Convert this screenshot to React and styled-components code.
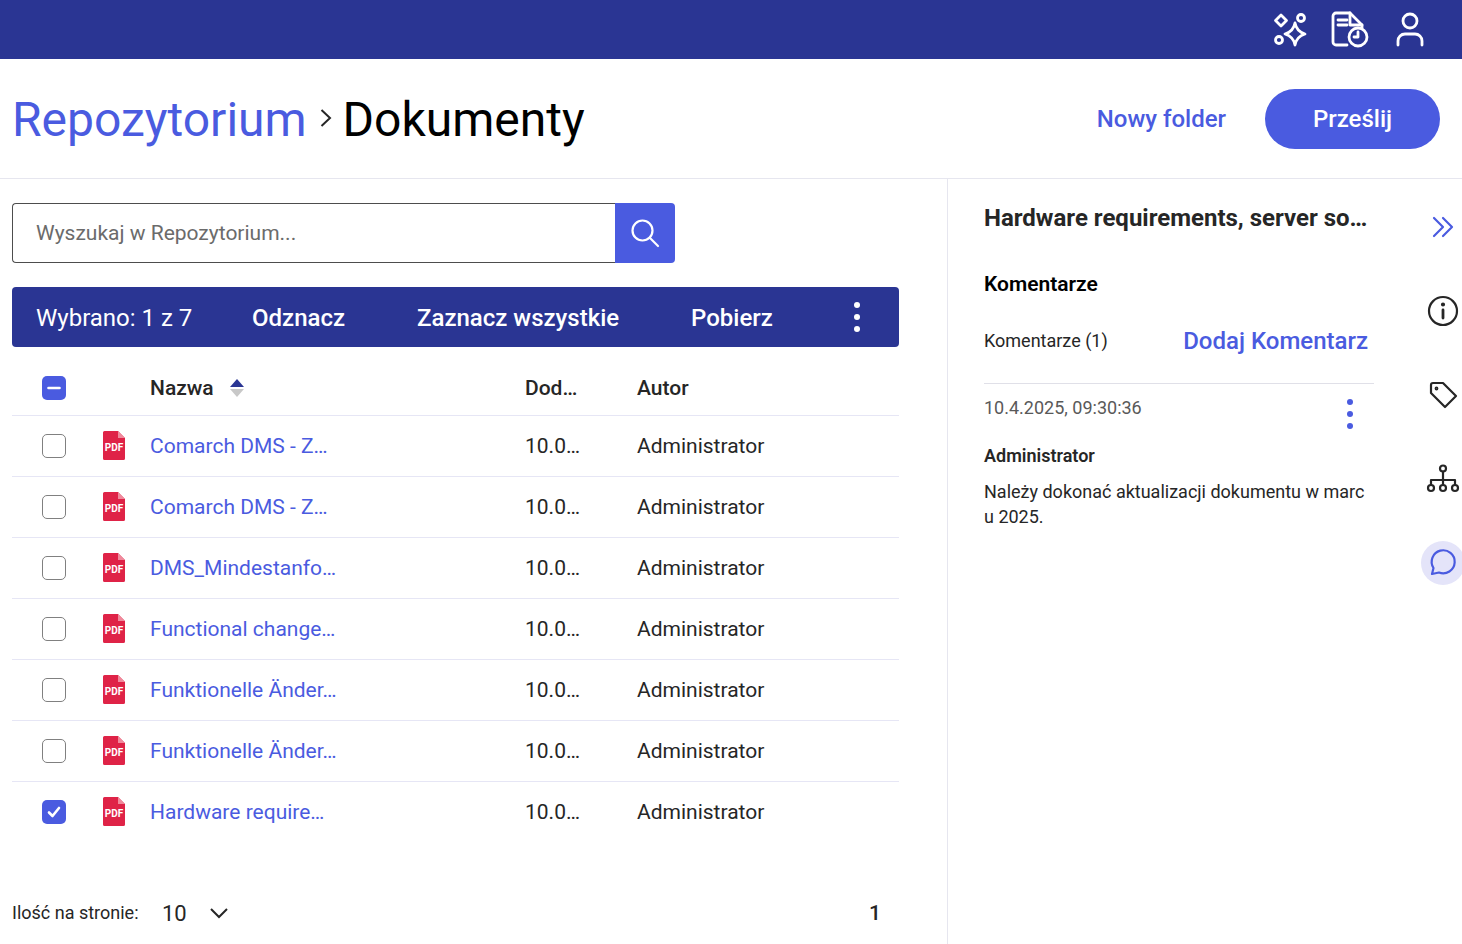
import React from 'react';
import styled, { createGlobalStyle } from 'styled-components';

const Global = createGlobalStyle`
  html, body { margin: 0; padding: 0; background: #fff; }
  body { font-family: Roboto, "Liberation Sans", sans-serif; color: #262626; }
  * { box-sizing: border-box; }
`;
const Page = styled.div`
  width: 1462px; height: 944px; overflow: hidden; display: flex; flex-direction: column;
`;
const TopBar = styled.header`
  height: 59px; background: #2a3593; display: flex; align-items: center; justify-content: flex-end;
  padding: 0 32px 0 0; gap: 20px; flex: none;
`;
const TopIcon = styled.svg`
  width: 40px; height: 40px; fill: none; stroke: #fff; stroke-width: 2.8; stroke-linecap: round; stroke-linejoin: round;
`;
const TitleRow = styled.div`
  height: 120px; flex: none; display: flex; align-items: center; justify-content: space-between;
  padding: 0 22px 0 12px; border-bottom: 1px solid #e6e6ef;
`;
const Crumbs = styled.div`
  display: flex; align-items: center; font-size: 48px; line-height: 60px; padding-top: 2px;
`;
const CrumbLink = styled.span`color: #4a5be0;`;
const CrumbNow = styled.span`color: #000;`;
const CrumbSep = styled.svg`
  width: 14px; height: 24px; margin: 0 11px 3px 11px; fill: none; stroke: #262626; stroke-width: 2;
`;
const Actions = styled.div`display: flex; align-items: center; gap: 39px;`;
const LinkButton = styled.span`font-size: 24px; font-weight: 500; color: #4a5be0;`;
const Primary = styled.button`
  width: 175px; height: 60px; border: 0; border-radius: 30px; background: #4a5be0; color: #fff;
  font: 500 24px Roboto, sans-serif;
`;
const Body = styled.div`flex: 1; display: flex; min-height: 0;`;
const Left = styled.main`
  width: 948px; flex: none; border-right: 1px solid #e6e6ef; padding: 24px 48px 0 12px; display: flex; flex-direction: column;
`;
const Search = styled.div`display: flex; width: 663px; height: 60px;`;
const SearchBox = styled.div`
  flex: 1; border: 1px solid #4d4d4d; border-right: 0; border-radius: 4px 0 0 4px; display: flex; align-items: center;
  padding-left: 23px; font-size: 21px; color: #6b6b6b;
`;
const SearchBtn = styled.div`
  width: 60px; background: #4a5be0; border-radius: 0 4px 4px 0; display: flex; align-items: center; justify-content: center;
`;
const SelBar = styled.div`
  margin-top: 24px; height: 60px; background: #2a3593; border-radius: 4px; color: #fff; display: flex; align-items: center;
  padding-left: 24px; font-size: 24px; position: relative;
`;
const SelCount = styled.span`width: 216px; flex: none; margin-top: 1px;`;
const SelAction = styled.span`font-weight: 500; width: ${p => p.$w}px; flex: none; margin-top: 1px;`;
const Dots = styled.svg`width: 8px; height: 32px; fill: ${p => p.$c}; margin-top: ${p => p.$mt || 0}px;`;
const Row = styled.div`
  display: grid; grid-template-columns: 84px 54px 375px 112px 1fr; align-items: center; height: ${p => p.$h || 61}px;
  padding-top: ${p => p.$pt || 0}px;
  border-bottom: 1px solid ${p => p.$last ? 'transparent' : '#e6e6f5'}; font-size: 21px;
`;
const HeadCell = styled.div`font-weight: 500; display: flex; align-items: center; gap: 16px;`;
const CheckCell = styled.div`padding-left: 30px; display: flex;`;
const Box = styled.div`
  width: 24px; height: 24px; border-radius: 5px; display: flex; align-items: center; justify-content: center;
  background: ${p => p.$on ? '#4a5be0' : '#fff'}; border: ${p => p.$on ? 0 : '1px solid #808080'};
`;
const BoxMark = styled.svg`width: 18px; height: 18px; fill: none; stroke: #fff; stroke-width: 2.6; stroke-linecap: round; stroke-linejoin: round;`;
const PdfWrap = styled.div`padding-left: 7px; display: flex; margin-bottom: 2px;`;
const NameLink = styled.span`color: #4a5be0;`;
const Footer = styled.div`
  margin-top: 49px; display: flex; align-items: center; height: 42px; position: relative;
`;
const PerPage = styled.span`font-size: 18px; width: 150px; margin-bottom: 2px;`;
const PerValue = styled.span`font-size: 22px; width: 47px;`;
const PageNum = styled.span`font-size: 21px; font-weight: 500; margin-left: auto; margin-right: 18px;`;
const Chevron = styled.svg`width: 20px; height: 12px; fill: none; stroke: #262626; stroke-width: 2;`;
const Right = styled.aside`
  flex: 1; display: flex; min-width: 0; padding: 24px 0 0 36px; position: relative;
`;
const Detail = styled.div`width: 390px; flex: none; display: flex; flex-direction: column;`;
const DetailTitle = styled.div`font-size: 24px; font-weight: 700; line-height: 30px; height: 30px; white-space: nowrap;`;
const SectionTitle = styled.div`font-size: 21px; font-weight: 600; color: #000; margin-top: 37px; line-height: 28px;`;
const CommentHead = styled.div`
  display: flex; justify-content: space-between; align-items: center; margin-top: 26px; height: 32px; padding-right: 6px;
  font-size: 18px;
`;
const AddLink = styled.span`font-size: 24px; font-weight: 500; color: #4a5be0; margin-top: 2px;`;
const Comment = styled.div`margin-top: 27px; border-top: 1px solid #e0e0e8; padding-top: 12px;`;
const CommentMeta = styled.div`display: flex; justify-content: space-between; font-size: 18px; color: #595959; line-height: 24px; padding-right: 20px;`;
const Author = styled.div`font-size: 18px; font-weight: 600; margin-top: 13px; line-height: 26px;`;
const CommentText = styled.div`font-size: 18px; line-height: 25px; margin-top: 10px; word-break: break-all; width: 385px;`;
const Rail = styled.div`
  flex: none; width: 88px; display: flex; flex-direction: column; align-items: center; margin-left: 25px; padding-top: 2px;
  margin-right: -44px;
`;
const RailBtn = styled.div`
  width: 44px; height: 44px; margin-bottom: 40px; border-radius: 50%; display: flex; align-items: center; justify-content: center;
  background: ${p => p.$active ? '#e4e4f9' : 'transparent'};
`;
const RailIcon = styled.svg`
  width: 36px; height: 36px; fill: none; stroke: ${p => p.$c || '#262626'}; stroke-width: 2.2; stroke-linecap: round; stroke-linejoin: round;
`;

const Pdf = () => (
  <svg width="22" height="29" viewBox="0 0 22 29">
    <path d="M1.5 0H15l7 7v20.5a1.5 1.5 0 0 1-1.5 1.5h-19A1.5 1.5 0 0 1 0 27.500V1.500A1.500 1.500 0 0 1 1.500 0z" fill="#df2347" />
    <path d="M15 0l7 7h-7z" fill="#f08a9c" />
    <text x="11" y="20" textAnchor="middle" fill="#fff" fontSize="10" fontWeight="700" fontFamily="Roboto, sans-serif">PDF</text>
  </svg>
);
const Check = ({ state }) => (
  <Box $on={!!state}>
    {state === 'all' && <BoxMark viewBox="0 0 18 18"><path d="M4 9.500l3.500 3.500L14 5" /></BoxMark>}
    {state === 'some' && <BoxMark viewBox="0 0 18 18"><path d="M3.500 9h11" /></BoxMark>}
  </Box>
);
const rows = [
  'Comarch DMS - Z…', 'Comarch DMS - Z…', 'DMS_Mindestanfo…', 'Functional change…',
  'Funktionelle Änder…', 'Funktionelle Änder…', 'Hardware require…',
];

export default function App() {
  return (
    <Page>
      <Global />
      <TopBar>
        <TopIcon viewBox="0 0 40 40">
          <path d="M11 5l5.500 5.500L11 16l-5.500-5.500z" />
          <circle cx="31" cy="8" r="3.500" />
          <circle cx="9" cy="30" r="3.500" />
          <path d="M25 13c1 5.500 3.500 9 10 11-6.500 2-9 5.500-10 11-1-5.500-3.500-9-10-11 6.500-2 9-5.500 10-11z" />
        </TopIcon>
        <TopIcon viewBox="0 0 40 40">
          <path d="M17 35H6a3 3 0 0 1-3-3V6a3 3 0 0 1 3-3h14l12 12v3" />
          <path d="M20 3v12h12" />
          <path d="M8 10h9M8 15h9" />
          <circle cx="28" cy="27" r="9" />
          <path d="M28 27h-4M28 27v-5" />
        </TopIcon>
        <TopIcon viewBox="0 0 40 40">
          <circle cx="20" cy="11" r="7" />
          <path d="M8 35v-4a7 7 0 0 1 7-7h10a7 7 0 0 1 7 7v4" />
        </TopIcon>
      </TopBar>
      <TitleRow>
        <Crumbs>
          <CrumbLink>Repozytorium</CrumbLink>
          <CrumbSep viewBox="0 0 14 24"><path d="M3.500 4l8.500 8-8.500 8" /></CrumbSep>
          <CrumbNow>Dokumenty</CrumbNow>
        </Crumbs>
        <Actions>
          <LinkButton>Nowy folder</LinkButton>
          <Primary>Prześlij</Primary>
        </Actions>
      </TitleRow>
      <Body>
        <Left>
          <Search>
            <SearchBox>Wyszukaj w Repozytorium...</SearchBox>
            <SearchBtn>
              <svg width="32" height="32" viewBox="0 0 32 32" fill="none" stroke="#fff" strokeWidth="2.2" strokeLinecap="round">
                <circle cx="13.500" cy="13.500" r="10" />
                <path d="M21 21l8 8" />
              </svg>
            </SearchBtn>
          </Search>
          <SelBar>
            <SelCount>Wybrano: 1 z 7</SelCount>
            <SelAction $w={165}>Odznacz</SelAction>
            <SelAction $w={274}>Zaznacz wszystkie</SelAction>
            <SelAction $w={162}>Pobierz</SelAction>
            <Dots $c="#fff" viewBox="0 0 8 32"><circle cx="4" cy="4" r="3" /><circle cx="4" cy="16" r="3" /><circle cx="4" cy="28" r="3" /></Dots>
          </SelBar>
          <Row $h={69} $pt={14}>
            <CheckCell><Check state="some" /></CheckCell>
            <span />
            <HeadCell>
              Nazwa
              <svg width="14" height="18" viewBox="0 0 14 18">
                <path d="M7 0l7 8H0z" fill="#2a3593" />
                <path d="M7 18l7-8H0z" fill="#c8c8c8" />
              </svg>
            </HeadCell>
            <HeadCell>Dod…</HeadCell>
            <HeadCell>Autor</HeadCell>
          </Row>
          {rows.map((name, i) => (
            <Row key={i} $last={i === rows.length - 1}>
              <CheckCell><Check state={i === rows.length - 1 ? 'all' : null} /></CheckCell>
              <PdfWrap><Pdf /></PdfWrap>
              <NameLink>{name}</NameLink>
              <span>10.0…</span>
              <span>Administrator</span>
            </Row>
          ))}
          <Footer>
            <PerPage>Ilość na stronie:</PerPage>
            <PerValue>10</PerValue>
            <Chevron viewBox="0 0 20 12"><path d="M2 2l8 8 8-8" /></Chevron>
            <PageNum>1</PageNum>
          </Footer>
        </Left>
        <Right>
          <Detail>
            <DetailTitle>Hardware requirements, server so…</DetailTitle>
            <SectionTitle>Komentarze</SectionTitle>
            <CommentHead>
              <span>Komentarze (1)</span>
              <AddLink>Dodaj Komentarz</AddLink>
            </CommentHead>
            <Comment>
              <CommentMeta>
                <span>10.4.2025, 09:30:36</span>
                <Dots $mt={2} $c="#4a5be0" viewBox="0 0 8 32"><circle cx="4" cy="4" r="3" /><circle cx="4" cy="16" r="3" /><circle cx="4" cy="28" r="3" /></Dots>
              </CommentMeta>
              <Author>Administrator</Author>
              <CommentText>Należy dokonać aktualizacji dokumentu w marcu 2025.</CommentText>
            </Comment>
          </Detail>
          <Rail>
            <RailBtn>
              <RailIcon $c="#4a5be0" viewBox="0 0 36 36"><path d="M9 9l9 9-9 9M18 9l9 9-9 9" /></RailIcon>
            </RailBtn>
            <RailBtn>
              <RailIcon viewBox="0 0 36 36"><circle cx="18" cy="18" r="14" /><path d="M18 17v8" strokeWidth="2.800" /><circle cx="18" cy="11.500" r="1" /></RailIcon>
            </RailBtn>
            <RailBtn>
              <RailIcon viewBox="0 0 36 36"><path d="M6 8a2 2 0 0 1 2-2h10l13 13-11 11L6 16z" /><circle cx="11.500" cy="11.500" r=".8" /></RailIcon>
            </RailBtn>
            <RailBtn>
              <RailIcon viewBox="0 0 36 36"><circle cx="18" cy="7.500" r="3" /><path d="M18 10.500V23M6 24v-5h24v5" /><circle cx="6" cy="27" r="3" /><circle cx="18" cy="27" r="3" /><circle cx="30" cy="27" r="3" /></RailIcon>
            </RailBtn>
            <RailBtn $active>
              <RailIcon $c="#4a5be0" viewBox="0 0 36 36"><path d="M7 29l1.500-6A11.500 11.500 0 1 1 14 27.500z" /></RailIcon>
            </RailBtn>
          </Rail>
        </Right>
      </Body>
    </Page>
  );
}
